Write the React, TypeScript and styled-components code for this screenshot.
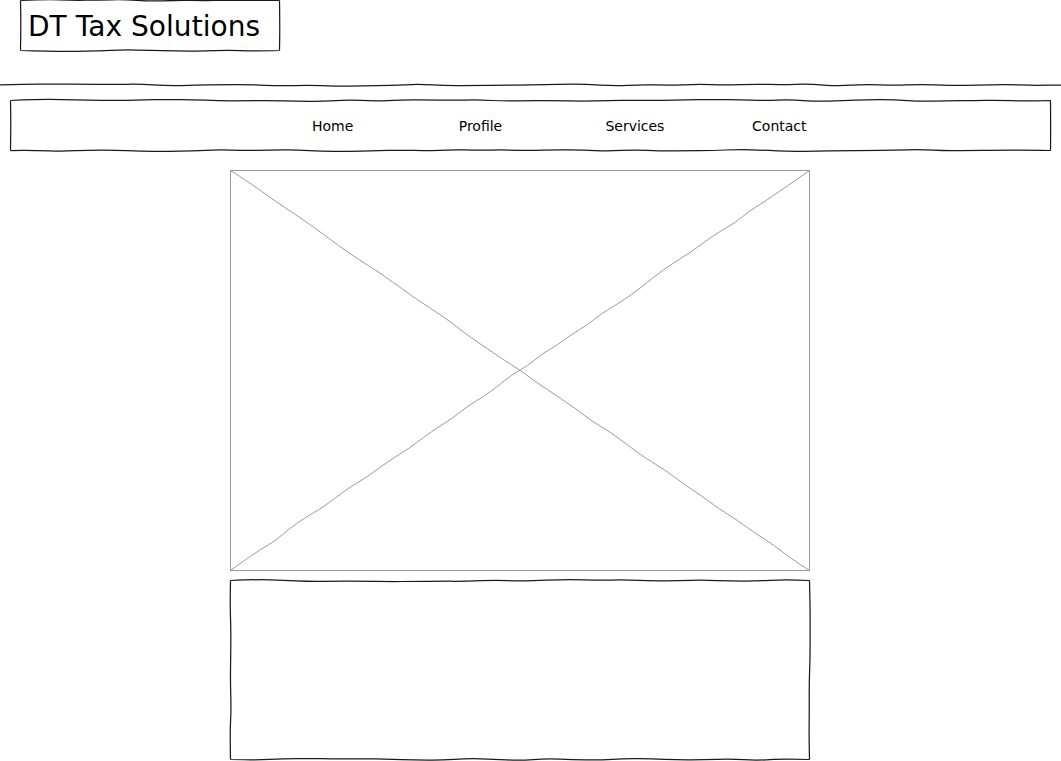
import React from 'react';
import styled, { createGlobalStyle } from 'styled-components';

const GlobalStyle = createGlobalStyle`
  html, body { margin: 0; padding: 0; background: #fff; }
  body {
    font-family: "DejaVu Sans", Verdana, sans-serif;
    color: #000;
    overflow: hidden;
  }
`;

type Pt = [number, number];

function makeRng(seed: number) {
  let s = seed % 2147483647;
  if (s <= 0) s += 2147483646;
  return () => {
    s = (s * 16807) % 2147483647;
    return (s - 1) / 2147483646;
  };
}

function wavyEdge(a: Pt, b: Pt, rand: () => number, amp: number, step: number): string {
  const dx = b[0] - a[0];
  const dy = b[1] - a[1];
  const len = Math.hypot(dx, dy);
  const n = Math.max(2, Math.round(len / step));
  const nx = -dy / len;
  const ny = dx / len;
  const pts: Pt[] = [];
  for (let i = 0; i <= n; i++) {
    const t = i / n;
    const off = i === 0 || i === n ? 0 : (rand() * 2 - 1) * amp;
    pts.push([a[0] + dx * t + nx * off, a[1] + dy * t + ny * off]);
  }
  let d = `M${pts[0][0].toFixed(2)} ${pts[0][1].toFixed(2)}`;
  for (let i = 1; i < pts.length - 1; i++) {
    const m: Pt = [(pts[i][0] + pts[i + 1][0]) / 2, (pts[i][1] + pts[i + 1][1]) / 2];
    d += ` Q${pts[i][0].toFixed(2)} ${pts[i][1].toFixed(2)} ${m[0].toFixed(2)} ${m[1].toFixed(2)}`;
  }
  const last = pts[pts.length - 1];
  d += ` L${last[0].toFixed(2)} ${last[1].toFixed(2)}`;
  return d;
}

function wavyRect(w: number, h: number, seed: number, amp = 1.1, step = 26): string {
  const r = makeRng(seed);
  const p = 0.5;
  const tl: Pt = [p, p];
  const tr: Pt = [w - p, p];
  const br: Pt = [w - p, h - p];
  const bl: Pt = [p, h - p];
  return [
    wavyEdge(tl, tr, r, amp, step),
    wavyEdge(tr, br, r, amp * 0.8, step),
    wavyEdge(br, bl, r, amp, step),
    wavyEdge(bl, tl, r, amp * 0.8, step),
  ].join(' ');
}

const FrameWrap = styled.div<{ $w: number; $h: number }>`
  position: relative;
  width: ${(p) => p.$w}px;
  height: ${(p) => p.$h}px;
  box-sizing: border-box;
  flex: none;
`;

const FrameSvg = styled.svg`
  position: absolute;
  left: 0;
  top: 0;
  overflow: visible;
  pointer-events: none;
`;

const SketchFrame: React.FC<{
  w: number;
  h: number;
  seed: number;
  className?: string;
  children?: React.ReactNode;
}> = ({ w, h, seed, className, children }) => (
  <FrameWrap $w={w} $h={h} className={className}>
    <FrameSvg width={w} height={h}>
      <path d={wavyRect(w, h, seed)} fill="none" stroke="#1a1a1a" strokeWidth={1.25} strokeLinejoin="round" />
    </FrameSvg>
    {children}
  </FrameWrap>
);

const Page = styled.div`
  width: 1061px;
  height: 761px;
  display: flex;
  flex-direction: column;
`;

const Header = styled.header`
  padding: 0 0 0 20px;
`;

const LogoFrame = styled(SketchFrame)`
  display: flex;
  align-items: center;
  padding: 3px 0 0 8px;
`;

const LogoText = styled.h1`
  margin: 0;
  font-family: "DejaVu Sans", Verdana, sans-serif;
  font-weight: normal;
  font-size: 28px;
  line-height: 1;
  white-space: nowrap;
  letter-spacing: 0.05px;
`;

const DividerSvg = styled.svg`
  display: block;
  margin-top: 32px;
  overflow: visible;
`;

const NavFrame = styled(SketchFrame)`
  margin: 13px 0 0 10px;
`;

const NavList = styled.nav`
  display: flex;
  align-items: center;
  height: 100%;
  padding-left: 302px;
  padding-top: 1px;
  box-sizing: border-box;
`;

const NavItem = styled.a`
  width: 146.7px;
  flex: none;
  font-size: 14px;
  color: #000;
  text-decoration: none;
  white-space: nowrap;
`;

const Main = styled.main`
  display: flex;
  flex-direction: column;
  padding-left: 230px;
  margin-top: 19px;
  gap: 9px;
`;

const ImageSvg = styled.svg`
  display: block;
  overflow: visible;
`;

const Divider: React.FC = () => {
  const r = makeRng(77);
  const d = wavyEdge([0, 2], [1061, 2], r, 1.1, 28);
  return (
    <DividerSvg width={1061} height={4}>
      <path d={d} fill="none" stroke="#1a1a1a" strokeWidth={1.25} />
    </DividerSvg>
  );
};

const ImagePlaceholder: React.FC = () => {
  const w = 580;
  const h = 401;
  const r = makeRng(314);
  const d1 = wavyEdge([0.5, 0.5], [w - 0.5, h - 0.5], r, 0.9, 22);
  const d2 = wavyEdge([0.5, h - 0.5], [w - 0.5, 0.5], r, 1.3, 18);
  return (
    <ImageSvg width={w} height={h}>
      <rect x={0.5} y={0.5} width={w - 1} height={h - 1} fill="#fff" stroke="#9a9a9a" strokeWidth={1} />
      <path d={d1} fill="none" stroke="#9a9a9a" strokeWidth={1} />
      <path d={d2} fill="none" stroke="#9a9a9a" strokeWidth={1} />
    </ImageSvg>
  );
};

const navItems = ['Home', 'Profile', 'Services', 'Contact'];

export default function App() {
  return (
    <>
      <GlobalStyle />
      <Page>
        <Header>
          <LogoFrame w={260} h={51} seed={11}>
            <LogoText>DT Tax Solutions</LogoText>
          </LogoFrame>
        </Header>
        <Divider />
        <NavFrame w={1041} h={51} seed={23}>
          <NavList>
            {navItems.map((item) => (
              <NavItem key={item} href="#">
                {item}
              </NavItem>
            ))}
          </NavList>
        </NavFrame>
        <Main>
          <ImagePlaceholder />
          <SketchFrame w={580} h={180} seed={41} />
        </Main>
      </Page>
    </>
  );
}
